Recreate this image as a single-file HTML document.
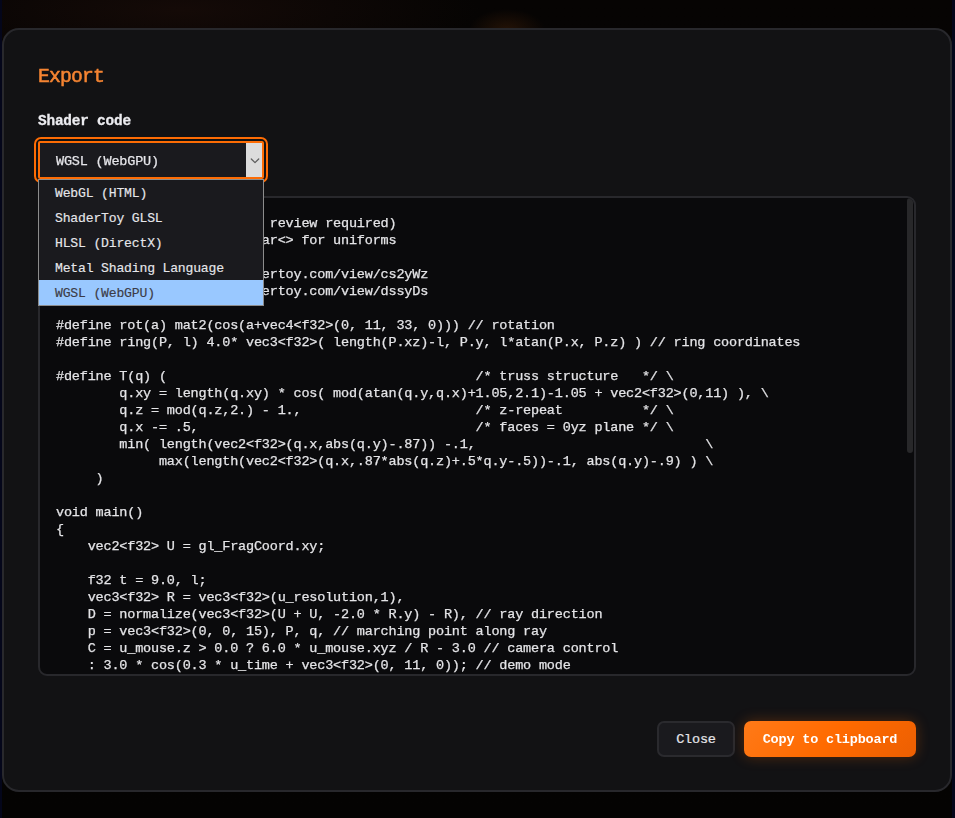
<!DOCTYPE html>
<html><head><meta charset="utf-8">
<style>
*{box-sizing:border-box;margin:0;padding:0}
html,body{width:955px;height:818px;overflow:hidden;background:#050403;font-family:"Liberation Mono",monospace;}
.bg{position:absolute;left:0;top:0;width:955px;height:818px;
 background:
  radial-gradient(ellipse 38px 21px at 507px 30px, rgba(56,28,8,.6), rgba(56,28,8,0) 100%),
  radial-gradient(ellipse 300px 60px at 180px 10px, rgba(30,14,10,.6), rgba(30,14,10,0) 100%),
  linear-gradient(#060403,#040302);}
.stripeL{position:absolute;left:0;top:0;width:2px;height:818px;background:#04061a}
.stripeR{position:absolute;left:952px;top:0;width:3px;height:818px;background:#04061a}
.modal{position:absolute;left:2px;top:28px;width:950px;height:764px;background:#121214;border:2px solid #28282c;border-radius:17px;}
.title{position:absolute;left:38px;top:63.5px;font-size:19.7px;letter-spacing:-0.82px;font-weight:normal;-webkit-text-stroke:0.55px #f58432;color:#f58432;line-height:26px;white-space:pre}
.label{-webkit-text-stroke:0.3px #ececf0;position:absolute;left:38px;top:111px;font-size:14.4px;letter-spacing:-0.19px;font-weight:bold;color:#ececf0;line-height:20px;white-space:pre}
.ring{position:absolute;left:34px;top:137px;width:234px;height:46px;border:2px solid #fd6c04;border-radius:7px}
.select{position:absolute;left:38px;top:141px;width:226px;height:38px;border:2px solid #fd6c04;border-radius:2px;background:#1a1a1e;}
.select .txt{-webkit-text-stroke:0.25px #e6e6ea;position:absolute;left:16px;top:9.5px;font-size:13.5px;letter-spacing:-0.184px;color:#e6e6ea;line-height:17px;white-space:pre}
.arrow{position:absolute;left:206px;top:0px;width:16px;height:34px;background:#dcdcdc}
.arrow svg{position:absolute;left:4px;top:13.6px}
.drop{position:absolute;left:38px;top:179px;width:226px;height:127px;border:1px solid #8c8c8c;background:#1a1a1e}
.drop div{-webkit-text-stroke:0.15px;height:25px;padding-left:16px;padding-top:1px;font-size:13.1px;letter-spacing:-0.18px;color:#e6e6ea;line-height:25px;white-space:pre}
.drop div.sel{background:#99c8ff;color:#3c3c46}
.code{position:absolute;left:38px;top:196px;width:878px;height:480px;border:2px solid #28282c;border-radius:9px;background:#0a0a0c;overflow:hidden}
.code pre{position:absolute;left:16px;top:17px;-webkit-text-stroke:0.25px #e4e4e7;font-family:"Liberation Mono",monospace;font-size:13.5px;letter-spacing:-0.184px;line-height:17px;color:#e4e4e7;white-space:pre}
.thumb{position:absolute;left:867px;top:0px;width:6px;height:255px;border-radius:3px;background:#28282a}
.btn{position:absolute;top:721px;height:36px;border-radius:7px;font-size:13.5px;letter-spacing:-0.184px;line-height:34px;text-align:center;white-space:pre}
.close{left:657px;width:78px;border:2px solid #2a2a2e;background:#1a1a1e;color:#e6e6ea;line-height:33.5px;-webkit-text-stroke:0.2px #e6e6ea}
.copy{left:744px;width:172px;background:linear-gradient(135deg,#ff7a18,#ff6a00 50%,#ec5f02);color:#fff;font-weight:bold;line-height:37.5px;box-shadow:0 0 14px rgba(255,106,0,.28)}
.gs{will-change:transform}
</style></head><body>
<div class="bg"></div><div class="stripeL"></div><div class="stripeR"></div>
<div class="modal"></div>
<div class="title gs">Export</div>
<div class="label gs">Shader code</div>
<div class="code gs"><pre>// WGSL (auto conversion,  review required)
// Note: WGSL requires a var&lt;&gt; for uniforms

// source (GLSL): www.shadertoy.com/view/cs2yWz
// forked (GLSL): www.shadertoy.com/view/dssyDs

#define rot(a) mat2(cos(a+vec4&lt;f32&gt;(0, 11, 33, 0))) // rotation
#define ring(P, l) 4.0* vec3&lt;f32&gt;( length(P.xz)-l, P.y, l*atan(P.x, P.z) ) // ring coordinates

#define T(q) (                                       /* truss structure   */ \
        q.xy = length(q.xy) * cos( mod(atan(q.y,q.x)+1.05,2.1)-1.05 + vec2&lt;f32&gt;(0,11) ), \
        q.z = mod(q.z,2.) - 1.,                      /* z-repeat          */ \
        q.x -= .5,                                   /* faces = 0yz plane */ \
        min( length(vec2&lt;f32&gt;(q.x,abs(q.y)-.87)) -.1,                             \
             max(length(vec2&lt;f32&gt;(q.x,.87*abs(q.z)+.5*q.y-.5))-.1, abs(q.y)-.9) ) \
     )

void main()
{
    vec2&lt;f32&gt; U = gl_FragCoord.xy;

    f32 t = 9.0, l;
    vec3&lt;f32&gt; R = vec3&lt;f32&gt;(u_resolution,1),
    D = normalize(vec3&lt;f32&gt;(U + U, -2.0 * R.y) - R), // ray direction
    p = vec3&lt;f32&gt;(0, 0, 15), P, q, // marching point along ray
    C = u_mouse.z &gt; 0.0 ? 6.0 * u_mouse.xyz / R - 3.0 // camera control
    : 3.0 * cos(0.3 * u_time + vec3&lt;f32&gt;(0, 11, 0)); // demo mode
    
</pre><div class="thumb"></div></div>
<div class="ring"></div>
<div class="select gs"><div class="txt">WGSL (WebGPU)</div><div class="arrow"><svg width="10" height="8" viewBox="0 0 10 8"><path d="M1.3 2 L5 5.6 L8.7 2" fill="none" stroke="#5e5e5e" stroke-width="1.3" stroke-linecap="round" stroke-linejoin="round"/></svg></div></div>
<div class="drop"><div>WebGL (HTML)</div><div>ShaderToy GLSL</div><div>HLSL (DirectX)</div><div>Metal Shading Language</div><div class="sel">WGSL (WebGPU)</div></div>
<div class="btn close">Close</div>
<div class="btn copy gs">Copy to clipboard</div>
</body></html>
